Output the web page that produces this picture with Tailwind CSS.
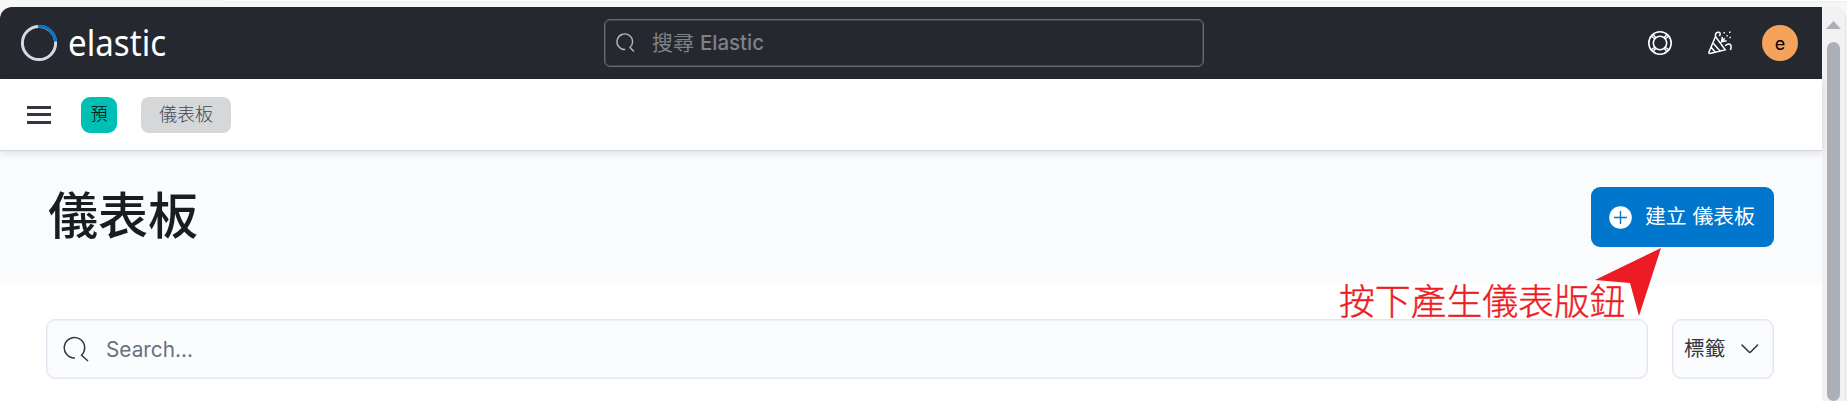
<!DOCTYPE html>
<html lang="zh-Hant">
<head>
<meta charset="utf-8">
<title>Elastic</title>
<script src="https://cdn.jsdelivr.net/npm/@tailwindcss/browser@4"></script>
</head>
<body class="relative flex h-[401px] w-[1847px] flex-col overflow-hidden bg-[#f7f7f7] font-['Inter','Noto_Sans_CJK_TC',sans-serif] text-[#343741]">
<div class="flex h-[7px] shrink-0 justify-end"><div class="h-px w-[1623px] bg-white shadow-[0_1px_3px_#00000018]"></div></div>
<div class="flex h-[394px] w-[1846px] overflow-hidden rounded-t-[12px] border-r border-[#e4e4e6] bg-[#f2f2f4]">
  <div class="flex w-[1822px] shrink-0 flex-col bg-white">
    <header class="flex h-[72px] shrink-0 items-center bg-[#25282f] pl-[20px] pr-[24px]">
      <div class="flex w-[584px] items-center">
        <svg class="h-[38px] w-[38px]" viewBox="0 0 38 38" fill="none" stroke-width="3"><circle cx="19" cy="19" r="16.6" stroke="#d3dae6"/><path d="M18 2.4A16.6 16.6 0 0 1 35.6 17.5" stroke="#0077cc"/></svg>
        <span class="ml-[10px] origin-left scale-x-[0.92] pb-px font-['Noto_Sans'] text-[36px] leading-[50px] text-white">elastic</span>
      </div>
      <div class="flex h-[48px] w-[600px] items-center rounded-[6px] border border-[#6a6c71] pl-[11px] text-[#7f8186] shadow-[inset_0_0_0_1px_#6a6c7166]">
        <svg class="h-[20px] w-[20px]" viewBox="0 0 20 20" fill="none" stroke="#b5b6b9" stroke-width="1.4"><path d="M9.2 16.5A7.8 7.8 0 1 1 14 14.5L18 18.5"/></svg>
        <span class="ml-[16px] text-[21px] leading-6">搜尋 <span class="text-[20.5px] font-medium">Elastic</span></span>
      </div>
      <div class="ml-auto flex items-center">
        <svg class="h-[24px] w-[24px]" viewBox="0 0 24 24" fill="none" stroke="#fff" stroke-width="1.6"><circle cx="12" cy="12" r="11.2"/><circle cx="12" cy="12" r="6.7"/><path stroke-width="1.4" d="M3.2 5l4 3.2M5 3.2l3.2 4M19 3.2l-3.2 4M20.8 5l-4 3.2M3.2 19l4-3.2M5 20.8l3.2-4M19 20.8l-3.2-4M20.8 19l-4-3.2"/></svg>
        <svg class="ml-[36px] h-[24px] w-[24px]" viewBox="0 0 24 24" fill="none" stroke="#fff" stroke-width="1.5"><path d="M7.5 5.5L.9 21.3q-.2 1.4 1.2 1.2L17.2 18.8ZM5.5 12.5l6.5 7.5M3.2 16.3l4.2 5.2M7.5 5.5q-.5-3.7 2.4-4.2 3.4-.5 1.6 3.8M13.8 10.5l3-3.2M14.4 5.8l-.8 4.9 5-1M17.2 14.8q3.7-3.2 5.6-.6.8 2-.4 4.8"/><path d="M15.5 1.8h1.4M21 1.3h1.5M18.5 4.8h1.3M21.5 6.6h1.4"/></svg>
        <div class="ml-[30px] flex h-[36px] w-[36px] items-center justify-center rounded-full bg-[#f5a35c] text-[18px] text-black">e</div>
      </div>
    </header>
    <nav class="z-10 flex h-[72px] shrink-0 items-center border-b border-[#d0d5e0] bg-white pl-[27px] shadow-[0_2px_8px_#00000020]">
      <div class="flex w-[24px] flex-col gap-[4.5px]"><i class="h-[3px] bg-[#343741]"></i><i class="h-[3px] bg-[#343741]"></i><i class="h-[3px] bg-[#343741]"></i></div>
      <div class="ml-[30px] flex h-[36px] w-[36px] items-center justify-center rounded-[9px] bg-[#00bfb3] text-[17px] font-light text-black">預</div>
      <div class="ml-[24px] flex h-[36px] w-[90px] items-center justify-center rounded-[8px] bg-[#d6d7d9] text-[18px] font-light text-[#42454e]">儀表板</div>
    </nav>
    <section class="flex h-[132px] shrink-0 items-center justify-between bg-[#fafbfd] pl-[48px] pr-[48px]">
      <h1 class="pb-[3px] text-[50px] font-medium leading-none text-[#1a1c21]">儀表板</h1>
      <button class="flex h-[60px] w-[183px] items-center rounded-[9px] bg-[#0077cc] pl-[18px] text-[20.8px] text-white">
        <svg class="mr-[13px] h-[23px] w-[23px]" viewBox="0 0 23 23"><circle cx="11.5" cy="11.5" r="11.3" fill="#fff"/><path d="M11.5 5v13M5 11.5h13" stroke="#0077cc" stroke-width="1.4"/></svg>
        <span class="pb-px">建立 儀表板</span>
      </button>
    </section>
    <section class="flex gap-[24px] pl-[46px] pt-[36px]">
      <div class="flex h-[60px] w-[1602px] items-center rounded-[9px] border border-[#e3e5f1] bg-[#fbfcfd] pl-[16px] shadow-[inset_0_0_0_1px_#e3e5f180]">
        <svg class="h-[26px] w-[26px]" viewBox="0 0 26 26" fill="none" stroke="#343741" stroke-width="1.5"><path d="M12 22A10.2 10.2 0 1 1 18.5 19.2L25 25"/></svg>
        <span class="ml-[17px] pt-[2px] text-[20.8px] text-[#69707d]">Search...</span>
      </div>
      <div class="flex h-[60px] w-[102px] items-center rounded-[9px] border border-[#e3e5f1] bg-[#fbfcfd] pl-[11px] shadow-[inset_0_0_0_1px_#e3e5f180]">
        <span class="text-[20.7px]">標籤</span>
        <svg class="ml-[15px] h-[12px] w-[20px]" viewBox="0 0 20 12" fill="none" stroke="#343741" stroke-width="1.6" stroke-linecap="round"><path d="M2 2l7 7q.8.8 1.6 0l7-7"/></svg>
      </div>
    </section>
  </div>
  <div class="flex w-[23px] flex-col items-center">
    <svg class="mt-[14px] h-[8px] w-[15px]" viewBox="0 0 15 8"><path d="M7.5 0L15 8H0Z" fill="#abb0b8"/></svg>
    <div class="mt-[13px] h-[359px] w-[13px] rounded-full bg-[#abb0b8]"></div>
  </div>
</div>
<div class="absolute left-[1339px] top-[277px] z-20 whitespace-nowrap text-[35.8px] font-light leading-[50px] text-[#ed1c24] [-webkit-text-stroke:0.4px_#ed1c24]">按下產生儀表版鈕</div>
<svg class="absolute left-[1594px] top-[247px] z-20 h-[71px] w-[68px]" viewBox="0 0 68 71"><path d="M67 1L45 69L36 36L1 33Z" fill="#ed1c24"/></svg>
</body>
</html>
